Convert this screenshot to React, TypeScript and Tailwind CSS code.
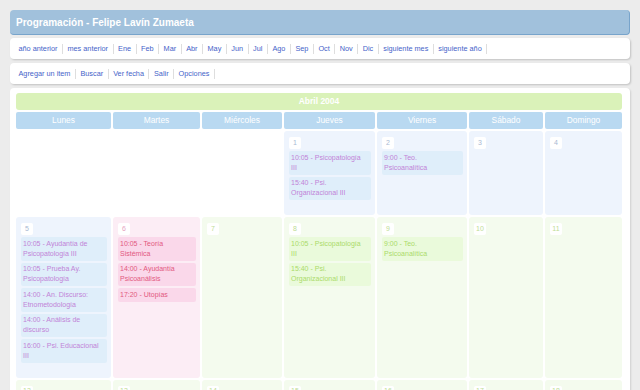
type Tone = 'blue' | 'pink' | 'green';

interface Day {
  n: number;
  tone: Tone;
  events?: string[];
}

const TONES: Record<Tone, { cell: string; event: string; num: string }> = {
  blue: { cell: 'bg-[#eef4fd]', event: 'bg-[#dfeefa] text-[#c183d8]', num: 'text-[#a9b9d3]' },
  pink: { cell: 'bg-[#fcedf5]', event: 'bg-[#fad8ea] text-[#e2587f]', num: 'text-[#e6a3bf]' },
  green: { cell: 'bg-[#f4fbee]', event: 'bg-[#eafadb] text-[#abda6a]', num: 'text-[#bedc95]' },
};

const MONTHS = ['Ene', 'Feb', 'Mar', 'Abr', 'May', 'Jun', 'Jul', 'Ago', 'Sep', 'Oct', 'Nov', 'Dic'];
const NAV1 = ['año anterior', 'mes anterior', ...MONTHS, 'siguiente mes', 'siguiente año'];
const NAV2 = ['Agregar un item', 'Buscar', 'Ver fecha', 'Salir', 'Opciones'];
const DAYS = ['Lunes', 'Martes', 'Miércoles', 'Jueves', 'Viernes', 'Sábado', 'Domingo'];

const jueves = ['10:05 - Psicopatología\nIII', '15:40 - Psi.\nOrganizacional III'];
const viernes = ['9:00 - Teo.\nPsicoanalítica'];

const WEEKS: (Day | null)[][] = [
  [
    null,
    null,
    null,
    { n: 1, tone: 'blue', events: jueves },
    { n: 2, tone: 'blue', events: viernes },
    { n: 3, tone: 'blue' },
    { n: 4, tone: 'blue' },
  ],
  [
    {
      n: 5,
      tone: 'blue',
      events: [
        '10:05 - Ayudantía de\nPsicopatología III',
        '10:05 - Prueba Ay.\nPsicopatología',
        '14:00 - An. Discurso:\nEtnometodología',
        '14:00 - Análisis de\ndiscurso',
        '16:00 - Psi. Educacional\nIII',
      ],
    },
    { n: 6, tone: 'pink', events: ['10:05 - Teoría\nSistémica', '14:00 - Ayudantía\nPsicoanálisis', '17:20 - Utopías'] },
    { n: 7, tone: 'green' },
    { n: 8, tone: 'green', events: jueves },
    { n: 9, tone: 'green', events: viernes },
    { n: 10, tone: 'green' },
    { n: 11, tone: 'green' },
  ],
  [12, 13, 14, 15, 16, 17, 18].map((n) => ({ n, tone: 'green' as Tone })),
];

function NavBar({ items }: { items: string[] }) {
  return (
    <div className="flex items-center h-[21px] pl-[4px] bg-white rounded-[4px] shadow-[1px_1px_2px_rgba(0,0,0,0.18)]">
      {items.map((item) => (
        <a key={item} className="px-[4.5px] border-r border-[#dedede] text-[7.3px] leading-[10px] text-[#4563c9] whitespace-nowrap">
          {item}
        </a>
      ))}
    </div>
  );
}

function Cell({ day }: { day: Day | null }) {
  if (!day) return <div />;
  const t = TONES[day.tone];
  return (
    <div className={`${t.cell} rounded-[3px] pt-[6px] pl-[5px] pr-[4px] pb-[15px]`}>
      <div className={`w-[12px] h-[12px] bg-white rounded-[2px] flex items-center justify-center text-[7px] ${t.num}`}>
        {day.n}
      </div>
      <div className="mt-[2px] flex flex-col gap-[2px]">
        {day.events?.map((ev, i) => (
          <div key={i} className={`${t.event} rounded-[2px] px-[2px] py-[1.75px] text-[7px] leading-[10px] whitespace-pre-line`}>
            {ev}
          </div>
        ))}
      </div>
    </div>
  );
}

export default function App() {
  return (
    <div className="w-[640px] h-[390px] overflow-hidden bg-[#ececec] px-[10px] pt-[10px] font-['Liberation_Sans',Arial,sans-serif]">
      <div className="h-[25px] bg-[#a1c1dc] border-r border-b border-[#78a4cb] rounded-[4px] flex items-center pl-[6px]">
        <h1 className="text-white font-bold text-[10px]">Programación - Felipe Lavín Zumaeta</h1>
      </div>

      <div className="mt-[3px]">
        <NavBar items={NAV1} />
      </div>
      <div className="mt-[4px]">
        <NavBar items={NAV2} />
      </div>

      <div className="mt-[4px] bg-white rounded-t-[4px] px-[6px] pt-[5px] h-[320px] shadow-[1px_1px_2px_rgba(0,0,0,0.12)]">
        <div className="grid grid-cols-[95px_87px_80px_91px_90px_74px_77px] gap-[2px]">
          <div className="col-span-7 h-[17px] bg-[#daf2b9] rounded-[3px] flex items-center justify-center text-white font-bold text-[8.5px]">
            Abril 2004
          </div>
          {DAYS.map((d) => (
            <div key={d} className="h-[17px] bg-[#b9d9f1] rounded-[2px] flex items-center justify-center text-white text-[8.4px]">
              {d}
            </div>
          ))}
          {WEEKS.flat().map((day, i) => (
            <Cell key={i} day={day} />
          ))}
        </div>
      </div>
    </div>
  );
}
